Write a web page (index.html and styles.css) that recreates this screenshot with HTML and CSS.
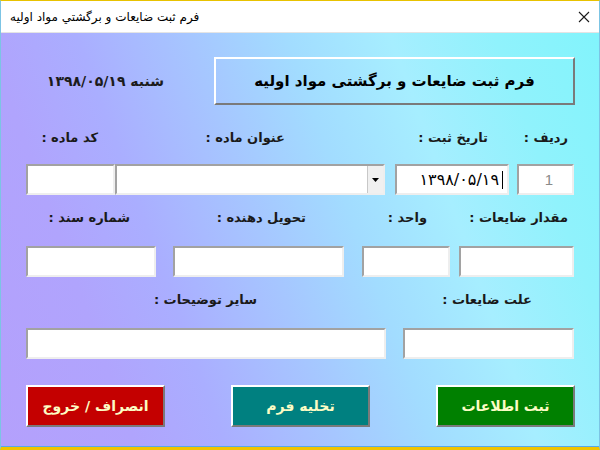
FILE: index.html
```html
<!DOCTYPE html>
<html lang="fa">
<head>
<meta charset="utf-8">
<title>فرم ثبت ضایعات</title>
<link rel="stylesheet" href="styles.css">
</head>
<body>
<div class="window">
  <div class="titlebar">
    <span class="title" dir="rtl">فرم ثبت ضایعات و برگشتي مواد اوليه</span>
    <svg class="close" width="12" height="12" viewBox="0 0 12 12"><path d="M1 1L11 11M11 1L1 11" stroke="#1a1a1a" stroke-width="1.1" fill="none"/></svg>
  </div>
  <div class="content">
    <div class="header-row">
      <div class="date-text" dir="rtl">شنبه ۱۳۹۸/۰۵/۱۹</div>
      <div class="raised header-btn" dir="rtl">فرم ثبت ضایعات و برگشتی مواد اولیه</div>
    </div>

    <div class="grid g1 labels first-labels">
      <div class="lbl col1 lbl-code" dir="rtl">کد ماده :</div>
      <div class="lbl col2 lbl-title" dir="rtl">عنوان ماده :</div>
      <div class="lbl col4 lbl-date" dir="rtl">تاریخ ثبت :</div>
      <div class="lbl col6 lbl-row" dir="rtl">ردیف :</div>
    </div>
    <div class="grid g1 fields fields-1">
      <div class="field col1"></div>
      <div class="field combo col2"><span class="drop"><svg width="7" height="4" viewBox="0 0 7 4"><path d="M0 0H7L3.5 4Z" fill="#000"/></svg></span></div>
      <div class="field col4 date-field" dir="rtl"><span class="caret"></span>۱۳۹۸/۰۵/۱۹</div>
      <div class="field col6 row-field">1</div>
    </div>

    <div class="grid g2 labels second-labels">
      <div class="lbl col1 lbl-doc" dir="rtl">شماره سند :</div>
      <div class="lbl col3 lbl-giver" dir="rtl">تحویل دهنده :</div>
      <div class="lbl col5 lbl-unit" dir="rtl">واحد :</div>
      <div class="lbl col7 lbl-qty" dir="rtl">مقدار ضایعات :</div>
    </div>
    <div class="grid g2 fields fields-2">
      <div class="field col1"></div>
      <div class="field col3"></div>
      <div class="field col5"></div>
      <div class="field col7"></div>
    </div>

    <div class="grid g3 labels third-labels">
      <div class="lbl col1 lbl-notes" dir="rtl">سایر توضیحات :</div>
      <div class="lbl col3 lbl-reason" dir="rtl">علت ضایعات :</div>
    </div>
    <div class="grid g3 fields fields-3">
      <div class="field col1"></div>
      <div class="field col3"></div>
    </div>

    <div class="actions">
      <div class="raised action red" dir="rtl">انصراف / خروج</div>
      <div class="raised action teal" dir="rtl">تخلیه فرم</div>
      <div class="raised action green" dir="rtl">ثبت اطلاعات</div>
    </div>
  </div>
</div>
</body>
</html>
```

FILE: styles.css
```css
* { box-sizing: border-box; }
html, body { margin: 0; padding: 0; }
body {
  font-family: "DejaVu Sans", "Noto Sans", sans-serif;
  color: #1c1c1c;
  background: #fff;
}
.window {
  width: 600px;
  height: 450px;
  display: flex;
  flex-direction: column;
  border-top: 1px solid #e8c200;
  border-left: 1px solid #7cc4e4;
  border-right: 1px solid #7cc4e4;
  border-bottom: 3px solid #f0c400;
}
.titlebar {
  height: 32px;
  flex: none;
  background: #fff;
  border-bottom: 1px solid #e4e4e4;
  display: flex;
  align-items: center;
  justify-content: space-between;
  padding: 0 9px 0 9px;
}
.title {
  font-size: 12px;
  color: #000;
}
.close { display: block; }
.content {
  flex: 1;
  padding: 0 24px 0 25px;
  border-bottom: 1px solid #58a8e8;
  background: linear-gradient(70deg, #b4a0fc 0%, #b0a4fd 18%, #aaaeff 30%, #a6c6ff 45%, #a2dcff 58%, #a6eeff 72%, #90f2fc 86%, #82f4fc 100%);
}
.header-row {
  margin-top: 24px;
  height: 48px;
  display: flex;
  align-items: center;
}
.date-text {
  width: 138px;
  text-align: right;
  font-size: 14px;
  font-weight: bold;
  white-space: nowrap;
}
.raised {
  border-style: solid;
  border-width: 2px;
  border-color: #ffffff #7a7a7a #7a7a7a #ffffff;
  display: flex;
  align-items: center;
  justify-content: center;
  font-weight: bold;
  white-space: nowrap;
}
.header-btn {
  margin-left: auto;
  width: 361px;
  height: 48px;
  font-size: 15px;
  color: #000;
}
.grid { display: grid; }
.g1 { grid-template-columns: 89px 270px 10px 114px 8px 57px; }
.g2 { grid-template-columns: 130px 17px 171px 18px 88px 9px 115px; }
.g3 { grid-template-columns: 360px 17px 171px; }
.col1 { grid-column: 1; }
.col2 { grid-column: 2; }
.col3 { grid-column: 3; }
.col4 { grid-column: 4; }
.col5 { grid-column: 5; }
.col6 { grid-column: 6; }
.col7 { grid-column: 7; }
.labels { height: 22px; }
.first-labels { margin-top: 22px; }
.second-labels { margin-top: 12px; }
.third-labels { margin-top: 12px; }
.fields-1 { margin-top: 15px; }
.fields-2 { margin-top: 17px; }
.fields-3 { margin-top: 17px; }
.lbl {
  font-size: 13px;
  font-weight: bold;
  line-height: 22px;
  white-space: nowrap;
  text-align: right;
  color: #1a1a1a;
}
.lbl-code { padding-right: 17px; }
.lbl-title { padding-right: 100px; }
.lbl-date { padding-right: 21px; }
.lbl-row { padding-right: 6px; }
.lbl-doc { padding-right: 26px; }
.lbl-giver { padding-right: 38px; }
.lbl-unit { padding-right: 23px; }
.lbl-qty { padding-right: 6px; }
.lbl-notes { padding-right: 129px; }
.lbl-reason { padding-right: 42px; }
.fields { height: 31px; }
.field {
  height: 31px;
  background: #fff;
  border-style: solid;
  border-width: 2px;
  border-color: #a2a2a2 #eeeeee #eeeeee #a2a2a2;
  font-size: 14px;
  line-height: 27px;
  white-space: nowrap;
}
.combo {
  display: flex;
  justify-content: flex-end;
  align-items: stretch;
  padding: 0;
}
.drop {
  width: 16px;
  background: #f0f0f0;
  border-left: 1px solid #c8c8c8;
  display: flex;
  align-items: center;
  justify-content: center;
}
.drop svg { display: block; }
.date-field {
  padding-right: 4px;
  color: #000;
  font-size: 16px;
  display: flex;
  align-items: center;
  justify-content: flex-start;
}
.caret {
  display: inline-block;
  width: 1px;
  height: 18px;
  background: #000;
  margin-left: 3px;
}
.row-field {
  text-align: right;
  padding-right: 19px;
  color: #8a8a8a;
  font-family: "Liberation Sans", sans-serif;
  font-size: 15px;
}
.actions {
  margin-top: 26px;
  display: flex;
  justify-content: space-between;
}
.action {
  width: 139px;
  height: 42px;
  font-size: 14px;
  color: #fcfcc4;
}
.red { background: #c40000; }
.teal { background: #008080; }
.green { background: #008000; }
```
